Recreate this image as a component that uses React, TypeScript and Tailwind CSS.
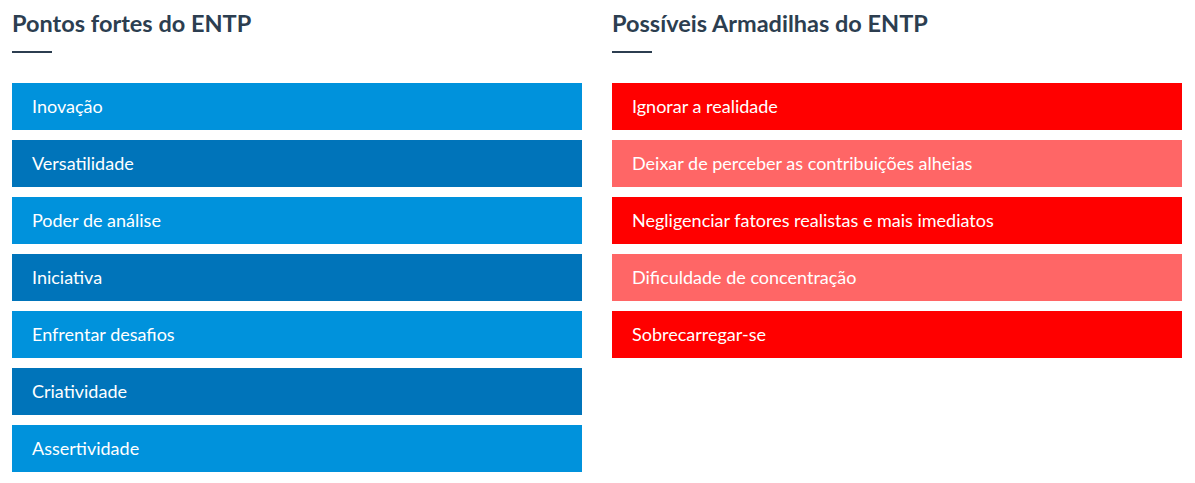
const STRENGTHS = [
  'Inovação',
  'Versatilidade',
  'Poder de análise',
  'Iniciativa',
  'Enfrentar desafios',
  'Criatividade',
  'Assertividade',
];

const PITFALLS = [
  'Ignorar a realidade',
  'Deixar de perceber as contribuições alheias',
  'Negligenciar fatores realistas e mais imediatos',
  'Dificuldade de concentração',
  'Sobrecarregar-se',
];

function Column({
  title,
  items,
  light,
  dark,
}: {
  title: string;
  items: string[];
  light: string;
  dark: string;
}) {
  return (
    <section className="w-[570px]">
      <h2 className="text-[23.5px] leading-[24px] font-bold text-[#2c3e50] pt-[11px]">{title}</h2>
      <div className="mt-[16px] h-[2px] w-[40px] bg-[#2c3e50]" />
      <ul className="mt-[30px] flex flex-col gap-[10px]">
        {items.map((item, i) => (
          <li
            key={item}
            className={`h-[47px] flex items-center pl-[20px] text-[18px] text-white ${
              i % 2 === 0 ? dark : light
            }`}
          >
            {item}
          </li>
        ))}
      </ul>
    </section>
  );
}

export default function App() {
  return (
    <main
      className="flex gap-[30px] px-[12px] bg-white min-h-[483px]"
      style={{ fontFamily: 'Lato, "Noto Sans", sans-serif' }}
    >
      <Column title="Pontos fortes do ENTP" items={STRENGTHS} dark="bg-[#0092dc]" light="bg-[#0074ba]" />
      <Column title="Possíveis Armadilhas do ENTP" items={PITFALLS} dark="bg-[#ff0000]" light="bg-[#ff6666]" />
    </main>
  );
}
